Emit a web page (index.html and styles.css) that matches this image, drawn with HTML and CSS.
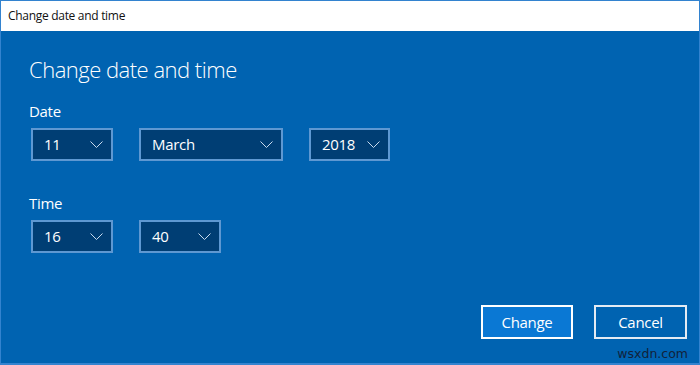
FILE: index.html
```html
<!DOCTYPE html>
<html lang="en">

<head>
  <meta charset="UTF-8">
  <title>Change date and time</title>
  <link rel="stylesheet" href="styles.css">
</head>

<body>
  <div class="window">
    <div class="titlebar">Change date and time</div>

    <div class="content">
      <h1>Change date and time</h1>

      <div class="label">Date</div>
      <div class="fields">
        <div class="select w-day"><span>11</span>
          <svg width="13" height="7" viewBox="0 0 13 7"><path d="M0.5 0.5 L6.5 6.5 L12.5 0.5" /></svg>
        </div>
        <div class="select w-month"><span>March</span>
          <svg width="13" height="7" viewBox="0 0 13 7"><path d="M0.5 0.5 L6.5 6.5 L12.5 0.5" /></svg>
        </div>
        <div class="select w-year"><span>2018</span>
          <svg width="13" height="7" viewBox="0 0 13 7"><path d="M0.5 0.5 L6.5 6.5 L12.5 0.5" /></svg>
        </div>
      </div>

      <div class="label label-time">Time</div>
      <div class="fields">
        <div class="select w-day"><span>16</span>
          <svg width="13" height="7" viewBox="0 0 13 7"><path d="M0.5 0.5 L6.5 6.5 L12.5 0.5" /></svg>
        </div>
        <div class="select w-day"><span>40</span>
          <svg width="13" height="7" viewBox="0 0 13 7"><path d="M0.5 0.5 L6.5 6.5 L12.5 0.5" /></svg>
        </div>
      </div>

      <div class="buttons">
        <button class="btn btn-primary">Change</button>
        <button class="btn">Cancel</button>
      </div>
    </div>

    <div class="watermark">wsxdn.com</div>
  </div>
</body>

</html>
```

FILE: styles.css
```css
html, body {
  margin: 0;
  padding: 0;
}

body {
  font-family: "Open Sans", "Noto Sans", sans-serif;
  background-color: #0063b1;
}

.window {
  position: relative;
  width: 700px;
  height: 365px;
  box-sizing: border-box;
  border: 1px solid #3383cf;
  border-bottom-width: 2px;
  display: flex;
  flex-direction: column;
}

.titlebar {
  height: 30px;
  line-height: 30px;
  padding-left: 7px;
  background: #ffffff;
  color: #111;
  font-size: 12px;
  letter-spacing: -0.3px;
}

.content {
  flex: 1;
  display: flex;
  flex-direction: column;
  padding: 23px 12px 24px 28px;
  background-color: #0063b1;
  color: #ffffff;
}

h1 {
  margin: 0;
  font-size: 22px;
  font-weight: 300;
  line-height: 30px;
  letter-spacing: -0.5px;
}

.label {
  margin-top: 17px;
  font-size: 15px;
  line-height: 20px;
  letter-spacing: -0.3px;
}

.label-time {
  margin-top: 32px;
}

.fields {
  display: flex;
  gap: 26px;
  margin-top: 7px;
  padding-left: 2px;
}

.select {
  display: flex;
  align-items: center;
  justify-content: space-between;
  height: 33px;
  box-sizing: border-box;
  padding: 0 8px 1px 11px;
  border: 2px solid #5e98d2;
  background-color: #003e74;
  font-size: 15px;
  letter-spacing: -0.3px;
}

.select svg path {
  fill: none;
  stroke: #c9dbee;
  stroke-width: 1;
}

.w-day {
  width: 82px;
}

.w-month {
  width: 144px;
}

.w-year {
  width: 81px;
}

.buttons {
  display: flex;
  justify-content: flex-end;
  gap: 21px;
  margin-top: auto;
}

.btn {
  width: 93px;
  height: 34px;
  box-sizing: border-box;
  border: 2px solid #e4ebf3;
  background-color: #0063b1;
  color: #ffffff;
  font-family: inherit;
  font-size: 15px;
  letter-spacing: -0.3px;
  padding: 0;
}

.btn-primary {
  width: 92px;
  border-color: #ffffff;
  background-color: #0a78d4;
}

.watermark {
  position: absolute;
  right: 11px;
  bottom: 2px;
  font-family: "DejaVu Sans", sans-serif;
  font-size: 12.5px;
  color: #12223a;
}
```
